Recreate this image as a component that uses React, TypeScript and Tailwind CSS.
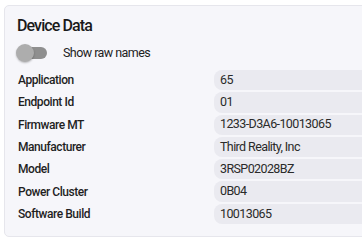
import React from "react";

const rows: [string, string][] = [
  ["Application", "65"],
  ["Endpoint Id", "01"],
  ["Firmware MT", "1233-D3A6-10013065"],
  ["Manufacturer", "Third Reality, Inc"],
  ["Model", "3RSP02028BZ"],
  ["Power Cluster", "0B04"],
  ["Software Build", "10013065"],
];

export default function App() {
  return (
    <div
      className="w-[362px] h-[251px] overflow-hidden bg-white pl-[4px] pt-[5px]"
      style={{ fontFamily: "Roboto, 'Liberation Sans', sans-serif" }}
    >
      <div className="w-[400px] h-[232px] rounded-[5px] border border-[#e6e6ec] bg-[#f6f6fa] pl-[12px] pt-[10px]">
        <div className="text-[16px] font-medium leading-[20px] tracking-[-0.9px] text-[#1a1a1a]">Device Data</div>
        <div className="mt-[6px] flex items-center h-[22px]">
          <div className="relative w-[34px] h-[18px]">
            <div className="absolute left-[4px] top-[3px] w-[26px] h-[12px] rounded-full bg-[#8f8f8f]" />
            <div className="absolute left-[-1px] top-0 w-[18px] h-[18px] rounded-full bg-[#adadad] shadow-[0_1px_2px_rgba(0,0,0,0.25)]" />
          </div>
          <span className="ml-[12px] text-[12.5px] tracking-[-0.55px] text-[#222]">Show raw names</span>
        </div>
        <div className="mt-[6px] flex flex-col gap-[2px]">
          {rows.map(([k, v]) => (
            <div key={k} className="flex items-center h-[20.3px]">
              <div className="w-[197px] pl-[1px] text-[12px] font-medium tracking-[-0.45px] text-[#1f1f1f]">{k}</div>
              <div className="flex-1 h-full flex items-center rounded-l-[8px] bg-[#eaeaf0] pl-[6px] text-[12.5px] tracking-[-0.6px] text-[#2a2a2a]">
                {v}
              </div>
            </div>
          ))}
        </div>
      </div>
    </div>
  );
}
